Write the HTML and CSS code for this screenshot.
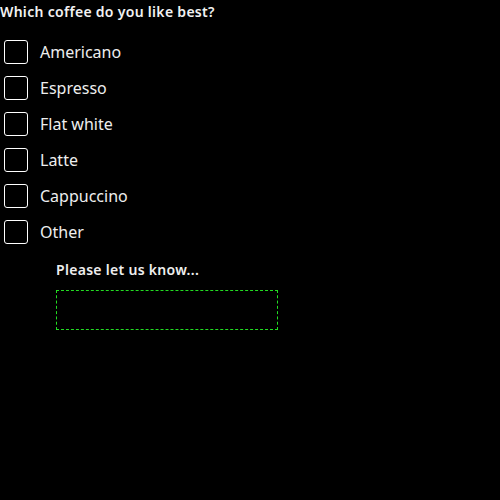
FILE: index.html
```html
<!DOCTYPE html>
<html>
<head>
<meta charset="utf-8">
<link rel="stylesheet" href="styles.css">
</head>
<body>
<fieldset class="question">
  <legend class="title">Which coffee do you like best?</legend>
  <ul class="options">
    <li class="option"><span class="box"></span><span class="label">Americano</span></li>
    <li class="option"><span class="box"></span><span class="label">Espresso</span></li>
    <li class="option"><span class="box"></span><span class="label">Flat white</span></li>
    <li class="option"><span class="box"></span><span class="label">Latte</span></li>
    <li class="option"><span class="box"></span><span class="label">Cappuccino</span></li>
    <li class="option"><span class="box"></span><span class="label">Other</span></li>
  </ul>
  <div class="other">
    <label class="other-label">Please let us know...</label>
    <div class="other-input"></div>
  </div>
</fieldset>
</body>
</html>
```
FILE: styles.css
```css
html, body {
  margin: 0;
  padding: 0;
  background: #000;
  color: #fff;
  font-family: "Noto Sans", "Open Sans", sans-serif;
}
.question {
  border: 0;
  margin: 0;
  padding: 0;
}
.title {
  padding: 0;
  font-size: 14px;
  font-weight: 600;
  line-height: 24px;
  color: #f2f2f2;
  letter-spacing: 0.3px;
}
.options {
  list-style: none;
  margin: 16px 0 0;
  padding: 0;
  display: flex;
  flex-direction: column;
  gap: 12px;
}
.option {
  display: flex;
  align-items: center;
  gap: 12px;
  padding-left: 4px;
  height: 24px;
}
.box {
  box-sizing: border-box;
  width: 24px;
  height: 24px;
  border: 1.5px solid #fff;
  border-radius: 3px;
}
.label {
  font-size: 16px;
  color: #eee;
}
.other {
  margin: 16px 0 0 56px;
  display: flex;
  flex-direction: column;
  gap: 10px;
}
.other-label {
  font-size: 14px;
  font-weight: 600;
  line-height: 20px;
  color: #eee;
  letter-spacing: 0.3px;
}
.other-input {
  box-sizing: border-box;
  width: 222px;
  height: 40px;
  border: 1px dashed #22dd22;
}
```
